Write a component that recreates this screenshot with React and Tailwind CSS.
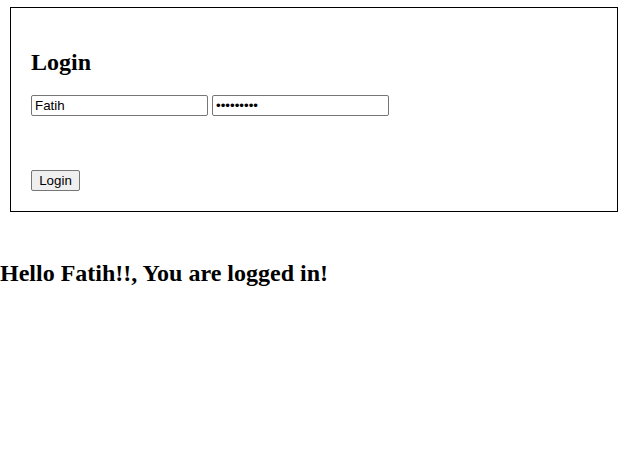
import { useState } from 'react';

const serif = { fontFamily: '"Liberation Serif", "Times New Roman", serif' };

export default function App() {
  const [username, setUsername] = useState('Fatih');
  const [password, setPassword] = useState('123456789');

  return (
    <div className="bg-white min-h-[475px] text-black font-['Liberation_Serif',serif]">
      {/* Login box */}
      <div className="mt-[7px] ml-[10px] w-[608px] border border-black px-[20px] py-[20px]">
        <h2 className="mt-[20px] mb-[19px] text-[24px] leading-[28px] font-bold">Login</h2>
        <div className="flex gap-[4px]">
          <input
            type="text"
            value={username}
            onChange={(e) => setUsername(e.target.value)}
            className="w-[177px] h-[21px] border border-[#767676] rounded-[2px] px-[3px] text-[13.33px] font-['Liberation_Sans',Arial,sans-serif] outline-none"
          />
          <input
            type="password"
            value={password}
            onChange={(e) => setPassword(e.target.value)}
            className="w-[177px] h-[21px] border border-[#767676] rounded-[2px] px-[3px] text-[13.33px] font-['Liberation_Sans',Arial,sans-serif] outline-none"
          />
        </div>
        <button className="mt-[54px] block w-[49px] h-[21px] bg-[#efefef] border border-[#767676] rounded-[2px] text-[13.33px] leading-none font-['Liberation_Sans',Arial,sans-serif]">
          Login
        </button>
      </div>

      {/* Greeting */}
      <h2 className="mt-[47px] text-[24px] leading-[28px] font-bold" style={serif}>
        Hello {username}!!, You are logged in!
      </h2>
    </div>
  );
}
